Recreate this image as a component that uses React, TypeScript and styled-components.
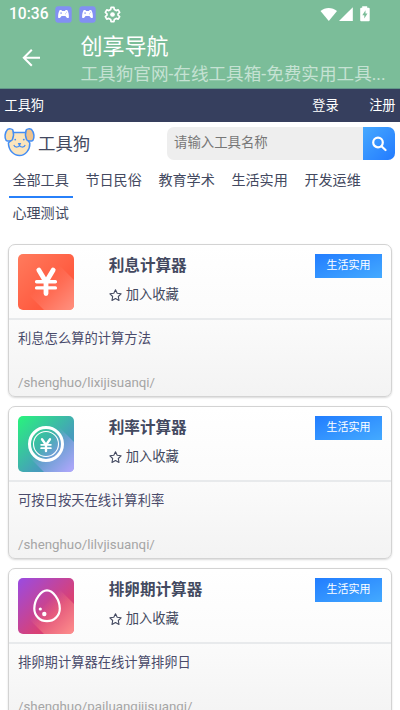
import React from "react";
import styled, { createGlobalStyle } from "styled-components";

const Global = createGlobalStyle`
  * { box-sizing: border-box; }
  html, body { margin: 0; background: #fff; }
  body { font-family: Roboto, "Noto Sans CJK SC", sans-serif; color: #434960; }
  svg { display: block; flex: none; }
`;

const Screen = styled.div`
  width: 400px;
  height: 710px;
  overflow: hidden;
  background: #fff;
`;

const AppHeader = styled.header`
  height: 89px;
  background: #7bbd99;
  color: #fff;
  border-bottom: 1px solid #62988a;
`;

const StatusBar = styled.div`
  height: 28px;
  display: flex;
  align-items: center;
  justify-content: space-between;
  padding: 0 30px 0 9px;
`;

const StatusGroup = styled.div`
  display: flex;
  align-items: center;
  gap: 7.5px;
`;

const Clock = styled.span`
  width: 38px;
  font-size: 15.6px;
  line-height: 20px;
  font-weight: 500;
  white-space: nowrap;
`;

const TitleBar = styled.div`
  display: flex;
  height: 60px;
  padding-left: 21px;
`;

const BackButton = styled.div`
  width: 59.5px;
  padding-top: 19px;
`;

const Titles = styled.div`
  padding-top: 5px;
`;

const PageTitle = styled.div`
  font-size: 22px;
  line-height: 28px;
`;

const PageSubtitle = styled.div`
  font-size: 17.6px;
  line-height: 26px;
  color: #c5e2d3;
  white-space: nowrap;
`;

const AccountBar = styled.nav`
  height: 33px;
  display: flex;
  align-items: center;
  padding: 0 4.5px 2px 4.5px;
  background: #363f5e;
  color: #fff;
  font-size: 13.2px;
`;

const AccountLink = styled.span<{ $first?: boolean }>`
  margin-left: ${(p) => (p.$first ? "auto" : "30.5px")};
`;

const SearchRow = styled.div`
  height: 43px;
  display: flex;
  padding: 5px 5px 0 4px;
`;

const Brand = styled.div`
  display: flex;
  width: 163px;
  height: 30px;
  align-items: center;
  gap: 3px;
  font-size: 17.4px;
`;

const SearchBox = styled.div`
  display: flex;
  width: 228px;
  height: 33px;
  border-radius: 7px;
  overflow: hidden;
  background: #eee;
`;

const Placeholder = styled.span`
  flex: 1;
  padding-left: 7px;
  line-height: 31px;
  font-size: 13.4px;
  color: #777;
`;

const SearchButton = styled.div`
  width: 32px;
  display: flex;
  align-items: center;
  justify-content: center;
  background: linear-gradient(135deg, #46a9ff, #227aff);
`;

const Tabs = styled.div`
  display: flex;
  flex-wrap: wrap;
  gap: 0 9px;
  padding: 0 9px;
  height: 79px;
  align-content: flex-start;
`;

const Tab = styled.div<{ $active?: boolean }>`
  width: 64px;
  height: 33px;
  padding-left: 3.4px;
  font-size: 14.1px;
  line-height: 30px;
  white-space: nowrap;
  border-bottom: 2px solid ${(p) => (p.$active ? "#2780fa" : "transparent")};
`;

const CardList = styled.main`
  display: flex;
  flex-direction: column;
  gap: 9px;
  padding: 0 8px;
`;

const Card = styled.article`
  height: 153px;
  flex: none;
  border: 1px solid #d3d3d3;
  border-radius: 7px;
  background: linear-gradient(#fff, #fbfbfb 48%, #f3f3f3);
  box-shadow: 0 1px 2px rgba(0, 0, 0, 0.15);
`;

const CardHead = styled.div`
  height: 75px;
  display: flex;
  padding: 9px 9px 0;
  border-bottom: 2px solid #e8eaec;
`;

const CardInfo = styled.div`
  flex: 1;
  margin-left: 34.7px;
`;

const CardTitle = styled.div`
  padding-top: 1px;
  font-size: 15.6px;
  line-height: 22px;
  font-weight: 700;
`;

const Favorite = styled.div`
  display: flex;
  align-items: center;
  gap: 4px;
  margin-top: 8px;
  font-size: 13.3px;
  line-height: 20px;
`;

const Tag = styled.div`
  width: 67px;
  height: 24px;
  background: linear-gradient(160deg, #227dff, #44aaff);
  color: #fff;
  font-size: 11px;
  line-height: 23px;
  text-align: center;
`;

const CardBody = styled.div`
  padding: 8px 9px;
`;

const Description = styled.div`
  font-size: 13.3px;
  line-height: 22px;
  color: #4a4b6b;
`;

const UrlPath = styled.div`
  margin-top: 23px;
  font-size: 13.3px;
  line-height: 20px;
  color: #a5a5a5;
`;

const GamepadIcon = () => (
  <svg width="17" height="17" viewBox="0 0 17 17">
    <rect x=".3" y=".3" width="16.4" height="16.4" rx="3" fill="#8290f3" />
    <path d="M4.8 4.1h1.5l.8.8h2.8l.8-.8h1.5c1.2 1.7 1.8 4.7 1.7 7.3-1 1.1-2.2.6-3.4-1.5H6.5c-1.2 2.1-2.4 2.6-3.4 1.5-.1-2.6.5-5.6 1.7-7.3Z" fill="#fff" />
    <path d="M5.3 7.1h1.6M6.1 6.3v1.6M10 7.8h.8M11.2 6.3h.7" stroke="#8290f3" strokeWidth=".7" />
  </svg>
);

const GearIcon = () => (
  <svg width="17" height="17" viewBox="0 0 24 24" fill="none" stroke="#fff" strokeWidth="2.4">
    <path d="m10 2-.6 3-2.6 1.5-2.9-1-2 3.5 2.3 2v2L1.9 15l2 3.5 2.9-1L9.4 19l.6 3h4l.6-3 2.6-1.5 2.9 1 2-3.5-2.3-2v-2l2.3-2-2-3.5-2.9 1L14.6 5 14 2Z" strokeLinejoin="round" />
    <circle cx="12" cy="12" r="3.3" fill="#fff" stroke="none" />
  </svg>
);

const SignalIcons = () => (
  <svg width="50" height="17" viewBox="0 0 50 17" fill="#fff">
    <path d="M.5 5.1C5.2.9 12.2.9 17 5.1L8.8 15Z" />
    <path d="M32.8 1.2V15H19Z" />
    <path d="M42.2.3h5v1.5h1.5q1 0 1 1v11.4q0 1-1 1h-7.5q-1 0-1-1V2.8q0-1 1-1h1Z" />
    <path d="m45.5 4.2-3.2 5h2v3.2l3.2-5h-2Z" fill="#7bbd99" />
  </svg>
);

const BackArrow = () => (
  <svg width="20" height="21" viewBox="0 0 20 21" fill="none" stroke="#fff" strokeWidth="2">
    <path d="M19 10.8H3M10.8 2.8l-8 8 8 8" />
  </svg>
);

const DogLogo = () => (
  <svg width="31" height="30" viewBox="0 0 31 30" stroke="#438df4" strokeWidth="1.5" strokeLinejoin="round">
    <path d="M8.5 5.6h14l2 8.4 1.3 2.2c.3 6.7-4.5 12.3-10.3 12.3S4.6 23.5 4.4 16l2-2Z" fill="#fbe5bd" />
    <path d="M3.5 2.4c1.8-.9 4.5-.7 5.3.6.8 2.3.7 7-.4 9.6-1 1.7-4.7 1.9-6.3.7C.5 11 .5 5.6 3.5 2.4Z" fill="#fbdca8" />
    <path d="M27.5 2.4c-1.8-.9-4.5-.7-5.3.6-.8 2.3-.7 7 .4 9.6 1 1.7 4.7 1.9 6.3.7 1.6-2.3 1.6-7.7-1.4-10.9Z" fill="#efc38e" />
    <circle cx="11.2" cy="12.6" r=".9" fill="#438df4" stroke="none" />
    <circle cx="19.8" cy="12.6" r=".9" fill="#438df4" stroke="none" />
    <path d="M14.4 16.6h2.2l-1.1 1.2Zm1.1 1.2c0 2.8-4.8 3.2-5.7.2m5.7-.2c0 2.8 4.8 3.2 5.7.2" fill="none" strokeWidth="1.1" />
  </svg>
);

const SearchIcon = () => (
  <svg width="16" height="16" viewBox="0 0 16 16" fill="none" stroke="#fff" strokeWidth="2.2" strokeLinecap="round">
    <circle cx="7" cy="6.5" r="4.8" />
    <path d="m10.5 10.2 4 3.8" />
  </svg>
);

const StarIcon = () => (
  <svg width="13" height="13" viewBox="0 0 13 13" fill="none" stroke="#434960" strokeWidth="1.1" strokeLinejoin="round">
    <path d="m6.5.8 1.7 3.5 3.9.5-2.8 2.7.7 3.9-3.5-1.8L3 11.4l.7-3.9L.9 4.8l3.9-.5Z" />
  </svg>
);

type Kind = "interest" | "rate" | "egg";

const gradients: Record<Kind, string[]> = {
  interest: ["#ff7b5d", "#ff5b40", "#ff9180"],
  rate: ["#28f47c", "#479cbc", "#b5a7ff"],
  egg: ["#994be3", "#d94175", "#ff908c"],
};

const ToolIcon = ({ kind }: { kind: Kind }) => {
  const [start, middle, end] = gradients[kind];
  return (
    <svg width="56" height="56" viewBox="0 0 56 56">
      <defs>
        <linearGradient id={`${kind}-base`} x1="0" y1="0" x2="1" y2="1">
          <stop stopColor={start} />
          <stop offset=".65" stopColor={middle} />
          <stop offset="1" stopColor={middle} />
        </linearGradient>
        <linearGradient id={`${kind}-shade`} gradientUnits="userSpaceOnUse" x1="26" y1="26" x2="56" y2="56">
          <stop stopColor={end} stopOpacity="0" />
          <stop offset=".5" stopColor={end} stopOpacity=".5" />
          <stop offset="1" stopColor={end} />
        </linearGradient>
      </defs>
      <rect width="56" height="56" rx="5" fill={`url(#${kind}-base)`} />
      <path d="M12 42 42 12l14 14v25q0 5-5 5H26Z" fill={`url(#${kind}-shade)`} />
      {kind === "interest" && (
        <g fill="none" stroke="#fff" strokeLinecap="round">
          <path d="m20.8 16 7.2 12 7.2-12M28 28v11.5" strokeWidth="4.8" />
          <path d="M18.6 27.7h18.8M18.6 33.9h18.8" strokeWidth="3.4" />
        </g>
      )}
      {kind === "rate" && (
        <g fill="none" stroke="#fff" strokeLinecap="round">
          <circle cx="28" cy="28" r="16.5" strokeWidth="3" />
          <circle cx="28" cy="28" r="12.5" strokeWidth="1.1" />
          <path d="m24 23.3 4 5.7 4-5.7M28 29v6" strokeWidth="2.4" />
          <path d="M23.1 28.8h9.8M23.1 32.2h9.8" strokeWidth="1.7" />
        </g>
      )}
      {kind === "egg" && (
        <g fill="#fff">
          <path d="M29 12.3c-6 0-12.7 9.5-12.7 18.2 0 7.5 5.7 12.7 12.7 12.7s12.8-5.2 12.8-12.7c0-8.7-6.8-18.2-12.8-18.2Z" fill="none" stroke="#fff" strokeWidth="2.2" />
          <circle cx="22.3" cy="31" r="1.6" />
          <circle cx="26.3" cy="36" r="2.2" />
        </g>
      )}
    </svg>
  );
};

const tools: { kind: Kind; title: string; description: string; path: string }[] = [
  { kind: "interest", title: "利息计算器", description: "利息怎么算的计算方法", path: "/shenghuo/lixijisuanqi/" },
  { kind: "rate", title: "利率计算器", description: "可按日按天在线计算利率", path: "/shenghuo/lilvjisuanqi/" },
  { kind: "egg", title: "排卵期计算器", description: "排卵期计算器在线计算排卵日", path: "/shenghuo/pailuanqijisuanqi/" },
];

const tabs = ["全部工具", "节日民俗", "教育学术", "生活实用", "开发运维", "心理测试"];

export default function App() {
  return (
    <Screen>
      <Global />
      <AppHeader>
        <StatusBar>
          <StatusGroup>
            <Clock>10:36</Clock>
            <GamepadIcon />
            <GamepadIcon />
            <GearIcon />
          </StatusGroup>
          <SignalIcons />
        </StatusBar>
        <TitleBar>
          <BackButton><BackArrow /></BackButton>
          <Titles>
            <PageTitle>创享导航</PageTitle>
            <PageSubtitle>工具狗官网-在线工具箱-免费实用工具...</PageSubtitle>
          </Titles>
        </TitleBar>
      </AppHeader>
      <AccountBar>
        <span>工具狗</span>
        <AccountLink $first>登录</AccountLink>
        <AccountLink>注册</AccountLink>
      </AccountBar>
      <SearchRow>
        <Brand><DogLogo />工具狗</Brand>
        <SearchBox>
          <Placeholder>请输入工具名称</Placeholder>
          <SearchButton><SearchIcon /></SearchButton>
        </SearchBox>
      </SearchRow>
      <Tabs>
        {tabs.map((tab, i) => <Tab key={tab} $active={i === 0}>{tab}</Tab>)}
      </Tabs>
      <CardList>
        {tools.map((tool) => (
          <Card key={tool.kind}>
            <CardHead>
              <ToolIcon kind={tool.kind} />
              <CardInfo>
                <CardTitle>{tool.title}</CardTitle>
                <Favorite><StarIcon />加入收藏</Favorite>
              </CardInfo>
              <Tag>生活实用</Tag>
            </CardHead>
            <CardBody>
              <Description>{tool.description}</Description>
              <UrlPath>{tool.path}</UrlPath>
            </CardBody>
          </Card>
        ))}
      </CardList>
    </Screen>
  );
}
